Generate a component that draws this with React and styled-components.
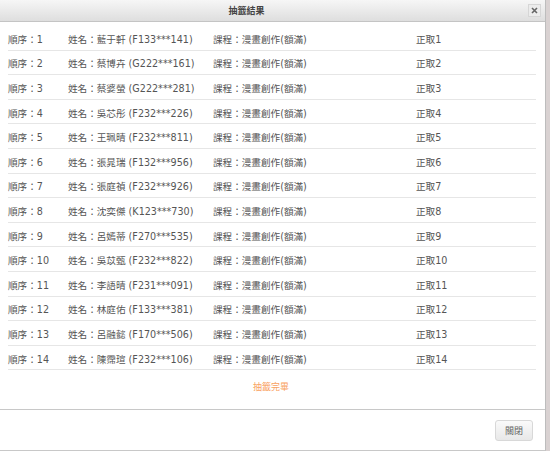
import styled, { createGlobalStyle } from "styled-components";

const GlobalStyle = createGlobalStyle`
  html, body {
    margin: 0;
    padding: 0;
    background: #d9d2d2;
  }
  body {
    font-family: "DejaVu Sans", "Noto Sans CJK TC", sans-serif;
  }
  * {
    box-sizing: border-box;
  }
`;

const Dialog = styled.div`
  width: 546px;
  height: 451px;
  background: #fff;
  border-right: 1px solid #bdbdbd;
  border-bottom: 1px solid #c8c8c8;
  display: flex;
  flex-direction: column;
`;

const Header = styled.div`
  height: 22px;
  flex: none;
  display: flex;
  align-items: center;
  justify-content: center;
  padding-right: 52px;
  position: relative;
  background: linear-gradient(#f6f6f6, #dedede);
  border-bottom: 1px solid #c4c4c4;
  font-size: 9px;
  font-weight: bold;
  color: #444;
`;

const CloseButton = styled.div`
  position: absolute;
  right: 4px;
  top: 4px;
  width: 13px;
  height: 13px;
  background: #ececec;
  border: 1px solid #d6d6d6;
  display: flex;
  align-items: center;
  justify-content: center;
`;

const Body = styled.div`
  flex: 1;
  padding: 4px 9px 0 8px;
`;

const Row = styled.div`
  display: grid;
  grid-template-columns: 60px 145px 203px 1fr;
  align-items: center;
  height: 24.6px;
  padding-top: 2px;
  border-bottom: 1px solid #e6e6e6;
  font-size: 9.6px;
  color: #555;
  white-space: nowrap;
`;

const Done = styled.div`
  text-align: center;
  color: #f9a15f;
  font-size: 9px;
  padding-top: 10px;
  padding-right: 2px;
`;

const Footer = styled.div`
  flex: none;
  height: 41px;
  border-top: 1px solid #c8c8c8;
  display: flex;
  align-items: center;
  justify-content: flex-end;
  padding-right: 12px;
`;

const Button = styled.button`
  width: 38px;
  height: 21px;
  padding: 0;
  margin-top: 1px;
  border: 1px solid #d8d8d8;
  border-radius: 3px;
  background: linear-gradient(#fafafa, #e8e8e8);
  color: #666;
  font-family: "DejaVu Sans", "Noto Sans CJK TC", sans-serif;
  font-size: 9px;
`;

const rows = [
  ["藍于軒", "F133***141"],
  ["蔡博卉", "G222***161"],
  ["蔡婆螢", "G222***281"],
  ["吳芯彤", "F232***226"],
  ["王珮晴", "F232***811"],
  ["張晁瑞", "F132***956"],
  ["張庭禎", "F232***926"],
  ["沈奕傑", "K123***730"],
  ["呂嫣蒂", "F270***535"],
  ["吳苡甄", "F232***822"],
  ["李語晴", "F231***091"],
  ["林庭佑", "F133***381"],
  ["呂融懿", "F170***506"],
  ["陳霈瑄", "F232***106"],
];

export default function App() {
  return (
    <>
      <GlobalStyle />
      <Dialog>
        <Header>
          抽籤結果
          <CloseButton>
            <svg width="7" height="7" viewBox="0 0 7 7">
              <path d="M1 1L6 6M6 1L1 6" stroke="#666" strokeWidth="1.6" />
            </svg>
          </CloseButton>
        </Header>
        <Body>
          {rows.map((r, i) => (
            <Row key={i}>
              <span>順序：{i + 1}</span>
              <span>姓名：{r[0]} ({r[1]})</span>
              <span>課程：漫畫創作(額滿)</span>
              <span>正取{i + 1}</span>
            </Row>
          ))}
          <Done>抽籤完畢</Done>
        </Body>
        <Footer>
          <Button>關閉</Button>
        </Footer>
      </Dialog>
    </>
  );
}
